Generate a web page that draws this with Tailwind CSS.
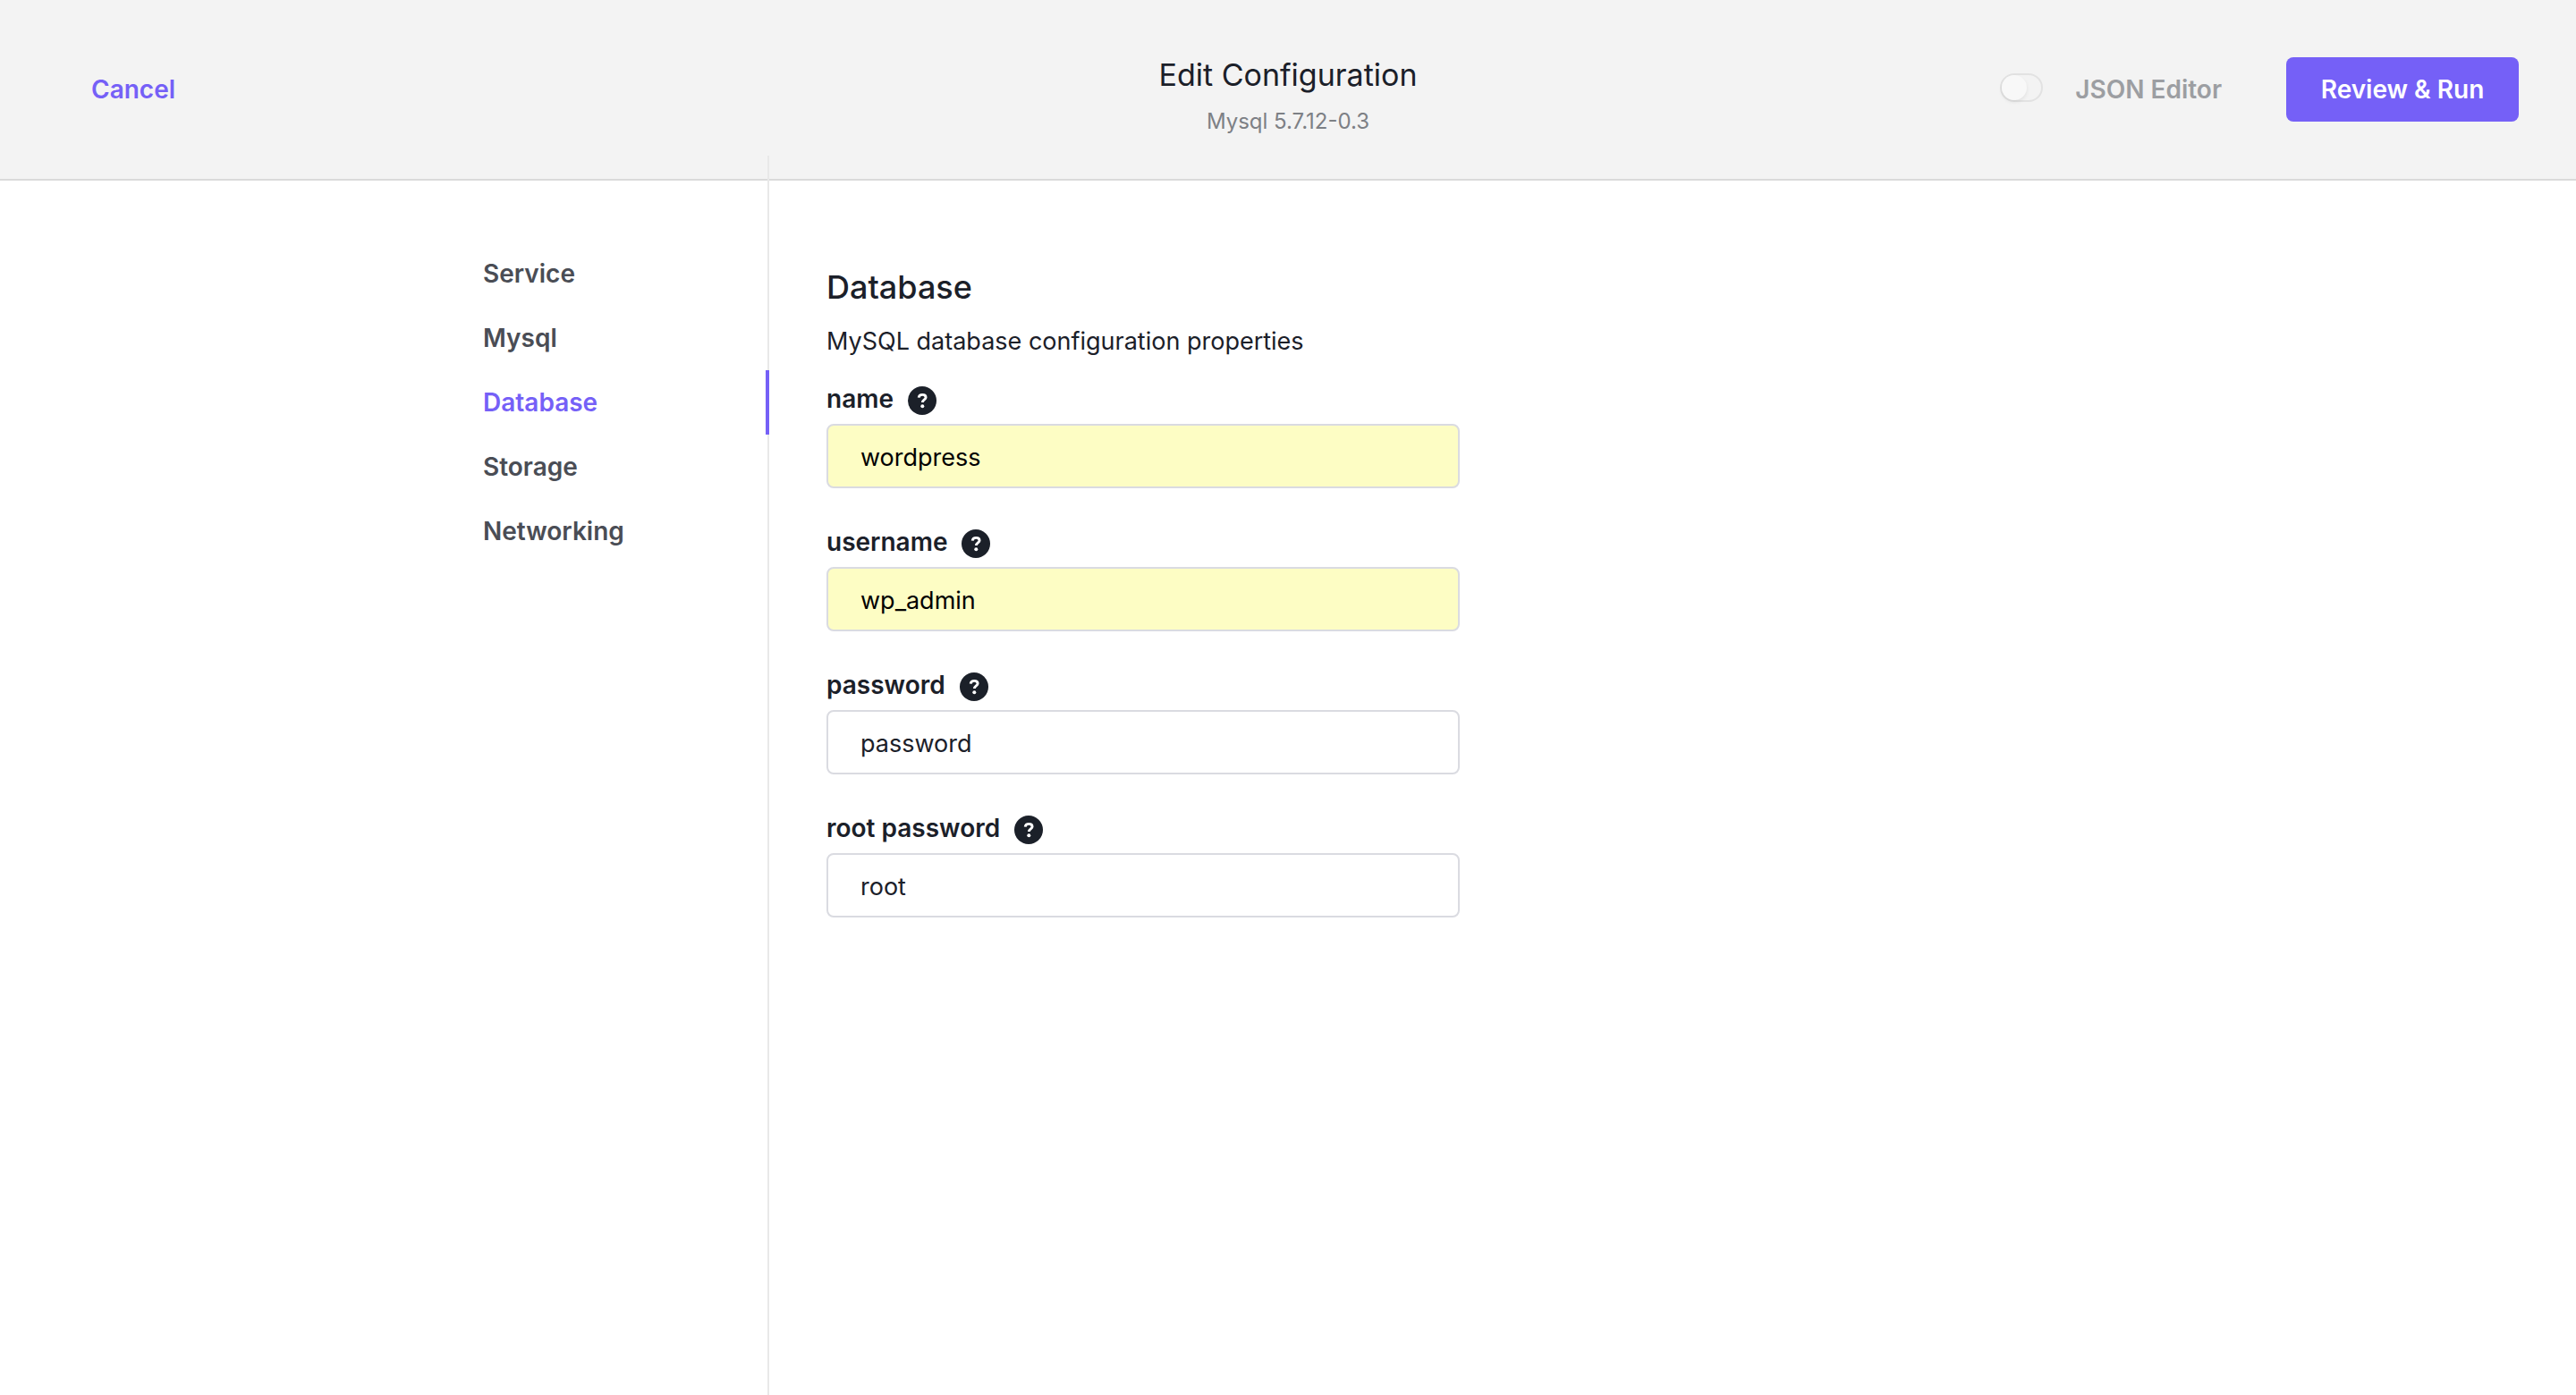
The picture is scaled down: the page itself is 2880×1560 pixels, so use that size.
<!DOCTYPE html>
<html lang="en">
<head>
<meta charset="utf-8">
<title>Edit Configuration</title>
<script src="https://cdn.jsdelivr.net/npm/@tailwindcss/browser@4"></script>
</head>
<body class="flex min-h-screen flex-col bg-white font-['Inter','Roboto',sans-serif] text-[28px] leading-10 text-[#1b2029]">
  <svg class="hidden" aria-hidden="true">
    <symbol id="help" viewBox="0 0 32 32">
      <circle cx="16" cy="16" r="16" fill="#1b2029"/>
      <path d="M12.2 12.6c.3-2.200 1.700-3.200 4-3.200 2.300 0 3.900 1.100 3.900 3 0 2.500-3.700 2.500-3.700 5.600" fill="none" stroke="#fff" stroke-width="2.900"/>
      <circle cx="16.300" cy="22.200" r="2" fill="#fff"/>
    </symbol>
  </svg>
  <header class="grid grid-cols-[1fr_auto_1fr] items-start border-b-2 border-[#dadada] bg-[#f3f3f3] px-16 pb-12 pt-16">
    <div class="flex h-[72px] items-center pl-[38px]">
      <button type="button" class="font-semibold text-[#7560f7]">Cancel</button>
    </div>
    <div class="text-center">
      <h1 class="text-[34px] leading-10">Edit Configuration</h1>
      <p class="mt-4 text-2xl leading-8 text-[#7d8085]">Mysql 5.7.12-0.3</p>
    </div>
    <div class="flex h-[72px] items-center justify-end gap-[72px]">
      <label class="flex items-center gap-9 font-semibold text-[#9c9ea2]">
        <input type="checkbox" class="mb-1 h-8 w-12 appearance-none rounded-full border-2 border-[#e2e2e2] before:block before:h-7 before:w-7 before:rounded-full before:bg-[#f8f8f8] before:shadow-[0_2px_4px_rgba(0,0,0,0.08)]">
        JSON Editor
      </label>
      <button type="button" class="h-[72px] w-[260px] rounded-lg bg-[#7560f7] font-semibold text-white">Review &amp; Run</button>
    </div>
  </header>

  <main class="mx-auto flex w-full max-w-[1800px] flex-1">
    <nav class="-mt-7 w-80 shrink-0 border-r-2 border-[#e8e8e8] pt-24 font-semibold text-[#4a4d55]">
      <a href="#service" class="flex h-[72px] items-center">Service</a>
      <a href="#mysql" class="flex h-[72px] items-center">Mysql</a>
      <a href="#database" class="-mr-0.5 flex h-[72px] items-center border-r-4 border-[#7560f7] text-[#7560f7]">Database</a>
      <a href="#storage" class="flex h-[72px] items-center">Storage</a>
      <a href="#networking" class="flex h-[72px] items-center">Networking</a>
    </nav>
    <form class="flex-1 pl-16 pt-24">
      <h2 class="text-4xl font-medium leading-[46px]">Database</h2>
      <p class="mt-[18px] text-[27px] leading-10">MySQL database configuration properties</p>
      <div class="mt-6 flex w-1/2 flex-col gap-10">
        <div>
          <div class="mb-1 flex h-11 items-center gap-4">
            <label for="name" class="pb-1 font-semibold">name</label>
            <button type="button" aria-label="About name"><svg class="block h-8 w-8"><use href="#help"/></svg></button>
          </div>
          <input id="name" type="text" value="wordpress" class="h-[72px] w-full rounded-lg border-2 border-[#dadbe1] bg-[#fdfdc4] px-9 pt-0.5 text-[27px] text-black">
        </div>
        <div>
          <div class="mb-1 flex h-11 items-center gap-4">
            <label for="username" class="pb-1 font-semibold">username</label>
            <button type="button" aria-label="About username"><svg class="block h-8 w-8"><use href="#help"/></svg></button>
          </div>
          <input id="username" type="text" value="wp_admin" class="h-[72px] w-full rounded-lg border-2 border-[#dadbe1] bg-[#fdfdc4] px-9 pt-0.5 text-[27px] text-black">
        </div>
        <div>
          <div class="mb-1 flex h-11 items-center gap-4">
            <label for="password" class="pb-1 font-semibold">password</label>
            <button type="button" aria-label="About password"><svg class="block h-8 w-8"><use href="#help"/></svg></button>
          </div>
          <input id="password" type="text" value="password" class="h-[72px] w-full rounded-lg border-2 border-[#dadbe1] bg-white px-9 pt-0.5 text-[27px]">
        </div>
        <div>
          <div class="mb-1 flex h-11 items-center gap-4">
            <label for="root-password" class="pb-1 font-semibold">root password</label>
            <button type="button" aria-label="About root password"><svg class="block h-8 w-8"><use href="#help"/></svg></button>
          </div>
          <input id="root-password" type="text" value="root" class="h-[72px] w-full rounded-lg border-2 border-[#dadbe1] bg-white px-9 pt-0.5 text-[27px]">
        </div>
      </div>
    </form>
  </main>
</body>
</html>
